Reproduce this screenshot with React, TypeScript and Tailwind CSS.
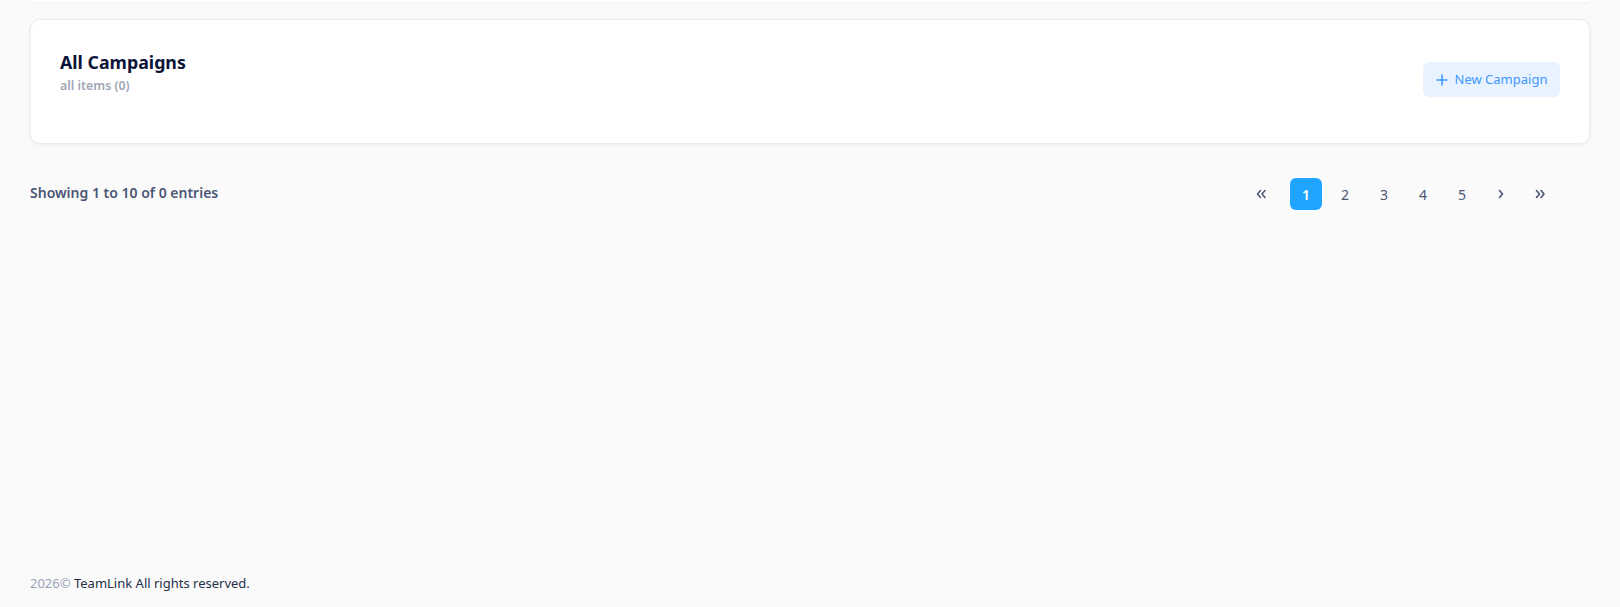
import React from 'react';

const pages = [1, 2, 3, 4, 5];

const Chevron: React.FC<{ dir: 'left' | 'right'; double?: boolean }> = ({ dir, double }) => {
  const d = dir === 'left' ? 'M5.5 2.5 L2.5 6 L5.5 9.5' : 'M2.5 2.5 L5.5 6 L2.5 9.5';
  return (
    <svg width={double ? 13 : 8} height="12" viewBox={double ? '0 0 13 12' : '0 0 8 12'} fill="none" stroke="currentColor" strokeWidth={1.6} strokeLinecap="round" strokeLinejoin="round">
      <path d={d} />
      {double && <path d={d} transform="translate(4.5 0)" />}
    </svg>
  );
};

const Pagination: React.FC = () => (
  <div className="flex items-center gap-[7px] mr-[34px] text-[#4b5675]">
    <button className="w-[32px] h-[32px] flex items-center justify-center mr-[6px]">
      <Chevron dir="left" double />
    </button>
    {pages.map(p => (
      <button
        key={p}
        className={
          p === 1
            ? 'w-[32px] h-[32px] rounded-[6px] bg-[#1fa5ff] text-white text-[14px] font-semibold flex items-center justify-center'
            : 'w-[32px] h-[32px] rounded-[6px] text-[14px] flex items-center justify-center'
        }
      >
        {p}
      </button>
    ))}
    <button className="w-[32px] h-[32px] flex items-center justify-center">
      <Chevron dir="right" />
    </button>
    <button className="w-[32px] h-[32px] flex items-center justify-center">
      <Chevron dir="right" double />
    </button>
  </div>
);

const App: React.FC = () => {
  return (
    <div className="min-h-screen flex flex-col bg-[#fafafa] px-[30px] font-['Noto_Sans',sans-serif]">
      {/* bottom edge of the card above */}
      <div className="h-[2px] mx-[1px] bg-white rounded-b-[8px] shadow-[0_1px_2px_rgba(0,0,0,0.04)]" />

      <div className="mt-[17px] h-[125px] bg-white rounded-[10px] border border-[#ececec] shadow-[0_1px_4px_rgba(0,0,0,0.06)] px-[29px] pt-[30px] flex justify-between">
        <div className="flex flex-col">
          <h2 className="text-[17.8px] leading-[24px] font-bold text-[#0b1437]">All Campaigns</h2>
          <span className="mt-[4px] text-[12.4px] leading-[16px] font-semibold text-[#a1a5b7]">all items (0)</span>
        </div>
        <button className="mt-[12px] h-[35px] w-[137px] rounded-[6px] bg-[#e8f3ff] text-[#3e97ff] text-[13px] flex items-center justify-center gap-[7px]">
          <svg width="12" height="12" viewBox="0 0 12 12" fill="none" stroke="currentColor" strokeWidth={1.6} strokeLinecap="round">
            <path d="M6 1v10M1 6h10" />
          </svg>
          New Campaign
        </button>
      </div>

      <div className="mt-[34px] flex items-center justify-between">
        <span className="text-[14px] font-semibold text-[#4b5675] -mt-[3px]">Showing 1 to 10 of 0 entries</span>
        <Pagination />
      </div>

      <footer className="mt-auto pb-[14px] text-[13px] leading-[20px]">
        <span className="text-[#99a1b7]">2026©</span>{' '}
        <span className="text-[#252f4a]">TeamLink All rights reserved.</span>
      </footer>
    </div>
  );
};

export default App;
